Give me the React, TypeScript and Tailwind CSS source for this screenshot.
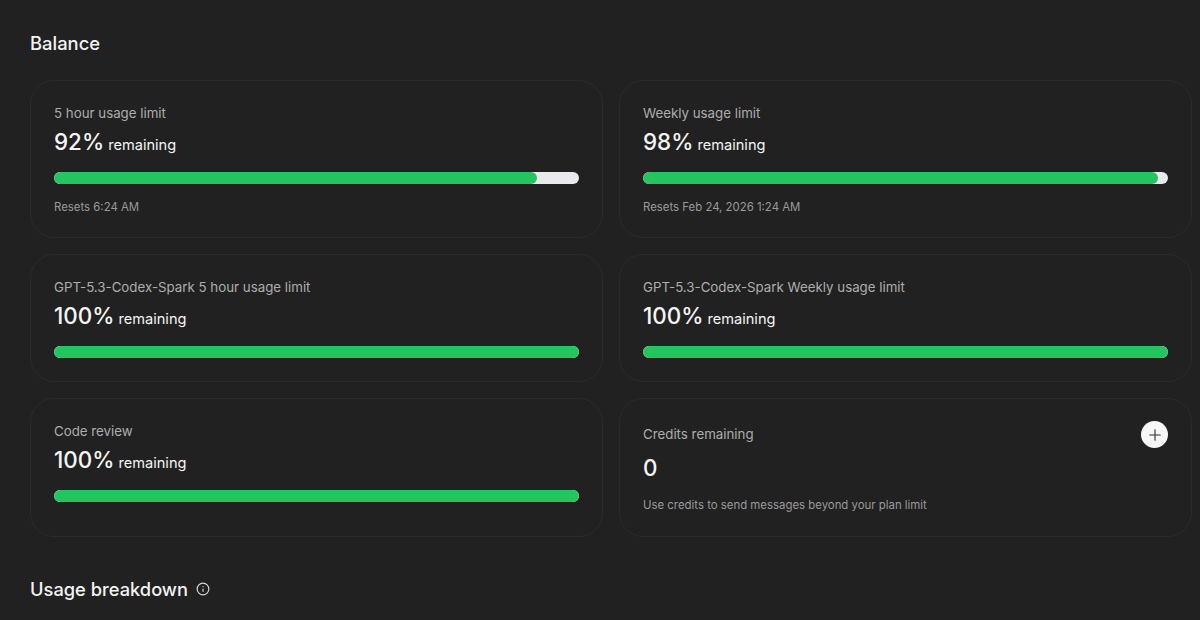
import { Plus, Info } from 'lucide-react';

type Limit = { label: string; pct: number; reset?: string; h: string };

const limits: Limit[] = [
  { label: '5 hour usage limit', pct: 92, reset: 'Resets 6:24 AM', h: 'h-[158px]' },
  { label: 'Weekly usage limit', pct: 98, reset: 'Resets Feb 24, 2026 1:24 AM', h: 'h-[158px]' },
  { label: 'GPT-5.3-Codex-Spark 5 hour usage limit', pct: 100, h: 'h-[128px]' },
  { label: 'GPT-5.3-Codex-Spark Weekly usage limit', pct: 100, h: 'h-[128px]' },
  { label: 'Code review', pct: 100, h: 'h-[139px]' },
];

const LimitCard = ({ label, pct, reset, h }: Limit) => (
  <div className={`${h} rounded-[24px] border border-[#2b2b2b] px-[23px] pt-[23px]`}>
    <p className="text-[13.3px] leading-[18px] text-[#adadad]">{label}</p>
    <p className="mt-[5px] flex items-baseline gap-[4px] leading-[30px] text-[#f5f5f5]">
      <span className="text-[22.4px] font-medium">{pct}%</span>
      <span className="text-[14.6px]">remaining</span>
    </p>
    <div className="mt-[12px] h-[12px] overflow-hidden rounded-full bg-[#e9e9ee]">
      <div className="h-full rounded-full bg-[#22c55e]" style={{ width: `${pct}%` }} />
    </div>
    {reset && <p className="mt-[16px] text-[11.4px] leading-[15px] text-[#9a9a9a]">{reset}</p>}
  </div>
);

export default function App() {
  return (
    <div className="h-[620px] w-[1200px] overflow-hidden bg-[#212121] pl-[30px] pr-[8px] pt-[31px] font-['Inter',sans-serif]">
      <h2 className="text-[18.4px] font-medium leading-[24px] text-[#f3f3f3]">Balance</h2>

      <div className="mt-[25px] grid grid-cols-2 gap-x-[16px] gap-y-[16px]">
        {limits.map((item) => (
          <LimitCard key={item.label} {...item} />
        ))}

        {/* Credits */}
        <div className="h-[139px] rounded-[24px] border border-[#2b2b2b] px-[23px] pt-[22px]">
          <div className="flex items-start justify-between">
            <p className="text-[13.3px] leading-[26px] text-[#adadad]">Credits remaining</p>
            <button className="flex h-[27px] w-[27px] items-center justify-center rounded-full bg-[#f7f7f7] text-[#2f2f2f]">
              <Plus size={18} strokeWidth={1.5} />
            </button>
          </div>
          <p className="mt-[5px] text-[22.4px] font-medium leading-[30px] text-[#f5f5f5]">0</p>
          <p className="mt-[15px] text-[11.4px] leading-[15px] text-[#9a9a9a]">
            Use credits to send messages beyond your plan limit
          </p>
        </div>
      </div>

      <div className="mt-[39px] flex items-center gap-[8px]">
        <h2 className="text-[18.3px] font-medium leading-[26px] text-[#f3f3f3]">Usage breakdown</h2>
        <Info size={14} strokeWidth={2} className="text-[#d8d8d8]" />
      </div>
    </div>
  );
}
